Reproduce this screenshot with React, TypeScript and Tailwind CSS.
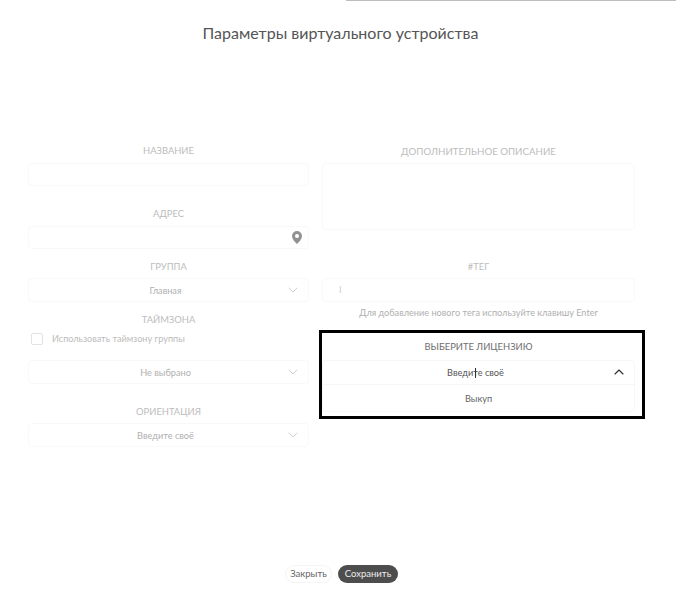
import { ChevronDown, ChevronUp } from "lucide-react";

const Label = ({ text, className = "text-[#bcbcbc]" }: { text: string; className?: string }) => (
  <p className={`pt-px text-center text-[9.4px] leading-[14px] ${className}`}>{text}</p>
);

const Select = ({ value, className = "" }: { value: string; className?: string }) => (
  <div className={`relative flex h-6 items-center justify-center rounded border border-[#f9f9f9] pt-[2px] pr-[6px] text-[9.2px] text-[#b0b0b0] ${className}`}>
    {value}
    <ChevronDown className="absolute top-[3px] right-[7px] h-4 w-4 text-[#c8c8c8]" strokeWidth={1.25} />
  </div>
);

export default function App() {
  return (
    <div className="relative flex h-[599px] w-[676px] flex-col overflow-hidden bg-white font-['Lato',sans-serif]">
      <div className="ml-auto h-px w-[330px] bg-[#bdbdbd]" />

      <h1 className="mt-[22px] pl-[5px] text-center text-[16px] leading-5 text-[#555555]">
        Параметры виртуального устройства
      </h1>

      <div className="mt-[100px] flex gap-[13px] pl-[28px]">
        {/* left column */}
        <div className="flex w-[281px] flex-col">
          <Label text="НАЗВАНИЕ" />
          <div className="mt-[5px] h-[23px] rounded border border-[#f9f9f9]" />

          <Label text="АДРЕС" className="mt-5 text-[#bcbcbc]" />
          <div className="mt-[5px] flex h-[23px] items-center justify-end rounded border border-[#f9f9f9] pr-[6px]">
            <svg viewBox="0 0 10 13" className="h-[13px] w-[10px]">
              <path
                fillRule="evenodd"
                fill="#929292"
                d="M5 0a5 5 0 0 1 5 5c0 3-3 6-5 8C3 11 0 8 0 5a5 5 0 0 1 5-5Zm0 3a2 2 0 1 0 0 4 2 2 0 0 0 0-4Z"
              />
            </svg>
          </div>

          <Label text="ГРУППА" className="mt-[10px] text-[#bcbcbc]" />
          <Select value="Главная" className="mt-1" />

          <Label text="ТАЙМЗОНА" className="mt-[10px] text-[#bcbcbc]" />
          <div className="mt-[6px] flex items-center gap-[9px] pl-[3px]">
            <div className="h-3 w-3 rounded-[2px] border border-[#e2e2e2]" />
            <span className="text-[9.1px] leading-3 text-[#bcbcbc]">Использовать таймзону группы</span>
          </div>
          <Select value="Не выбрано" className="mt-[15px]" />

          <Label text="ОРИЕНТАЦИЯ" className="mt-5 text-[#bcbcbc]" />
          <Select value="Введите своё" className="mt-1" />
        </div>

        {/* right column */}
        <div className="flex w-[313px] flex-col">
          <Label text="ДОПОЛНИТЕЛЬНОЕ ОПИСАНИЕ" className="text-[9.7px] text-[#bcbcbc]" />
          <div className="mt-[5px] h-[67px] rounded border border-[#f9f9f9]" />

          <Label text="#ТЕГ" className="mt-[29px] text-[#bcbcbc]" />
          <div className="mt-1 flex h-6 items-center rounded border border-[#f9f9f9] pl-4 text-[9px] text-[#cccccc]">
            I
          </div>
          <p className="mt-1 text-center text-[9.15px] leading-[14px] text-[#b0b0b0]">
            Для добавление нового тега используйте клавишу Enter
          </p>

          <div className="relative mt-[19px]">
            <Label text="ВЫБЕРИТЕ ЛИЦЕНЗИЮ" className="text-[#6e6e6e]" />
            <div className="mt-[6px] rounded border border-[#f6f6f6]">
              <div className="relative flex h-6 items-center justify-center border-b border-[#f6f6f6] pr-[6px] text-[9.2px] text-[#555555]">
                Введите своё
                <ChevronUp className="absolute top-[3px] right-[7px] h-4 w-4 text-[#333333]" strokeWidth={1.75} />
                {/* mouse text cursor */}
                <span className="absolute top-[7px] left-[152px] h-[10px] w-px bg-[#333333]" />
              </div>
              <div className="flex h-[26px] items-center justify-center pt-px text-[9.2px] text-[#666666]">Выкуп</div>
            </div>
            {/* highlight frame over the licence field */}
            <div className="pointer-events-none absolute top-[-9px] left-[-3px] h-[89px] w-[326px] border-[3px] border-black" />
          </div>
        </div>
      </div>

      <div className="mt-auto mb-4 flex justify-center gap-[6px] pl-[7px]">
        <button className="h-[18px] w-[47px] rounded-full border border-[#f4f4f4] text-[9.5px] text-[#666666]">Закрыть</button>
        <button className="h-[18px] w-[60px] rounded-full bg-[#4d4d4d] text-[9.5px] text-[#eeeeee]">Сохранить</button>
      </div>
    </div>
  );
}
